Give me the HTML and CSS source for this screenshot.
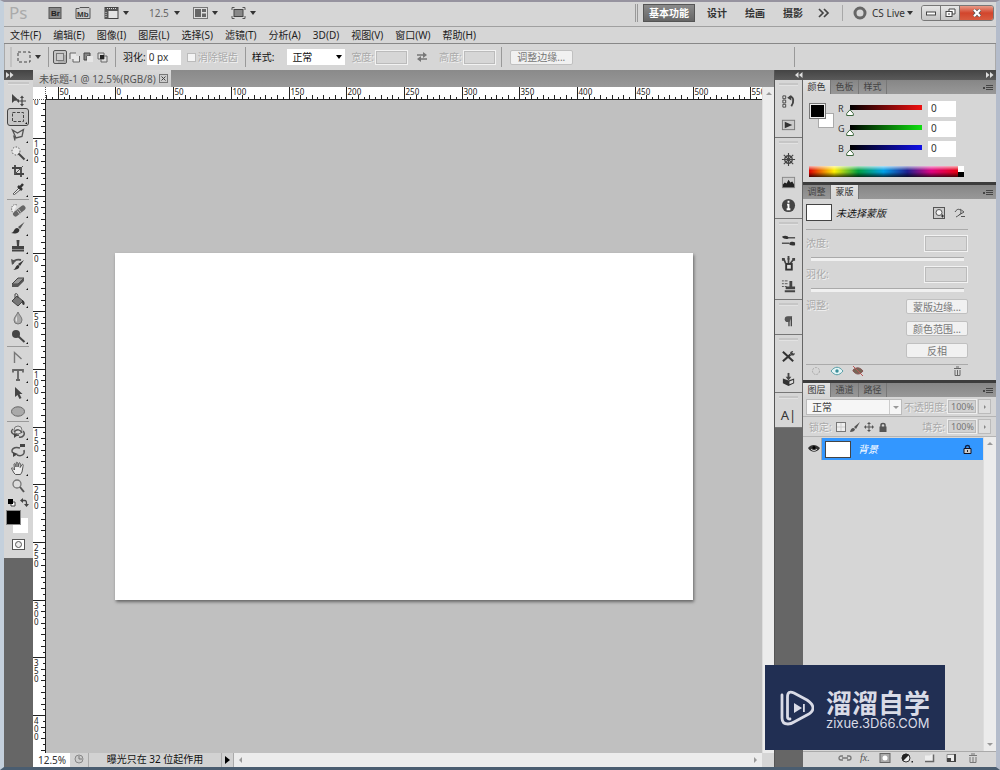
FILE: index.html
```html
<!DOCTYPE html>
<html lang="zh-CN">
<head>
<meta charset="utf-8">
<title>未标题-1</title>
<link rel="stylesheet" href="styles.css">
</head>
<body>
<div class="window">
  <header class="titlebar">
    <span class="ps">Ps</span>
    <button class="icon-btn" aria-label="Bridge"><svg width="14" height="14" viewBox="0 0 14 14"><rect x="1" y="1.500" width="12" height="11" fill="#888" stroke="#555"/><text x="3" y="10" class="badge-text">Br</text></svg></button>
    <button class="icon-btn mb" aria-label="Mini Bridge"><svg width="16" height="14" viewBox="0 0 16 14"><path d="M1 12.500V2.500h3l1-1h9l1 1v10z" fill="#ccc" stroke="#555"/><text x="2" y="10.500" class="badge-text dark">Mb</text></svg></button>
    <button class="icon-btn layout" aria-label="查看额外内容"><svg width="15" height="14" viewBox="0 0 15 14"><rect x="1" y="1.500" width="13" height="11" fill="#e4e4e4" stroke="#444"/><path d="M1 2h13v3H4.500v8H1z" fill="#555"/><path d="M3 2.500h10M2 6v6" stroke="#ddd" stroke-dasharray="1 1"/></svg><i class="caret"></i></button>
    <button class="icon-btn zoom-level">12.5<i class="caret"></i></button>
    <button class="icon-btn arrange" aria-label="排列文档"><svg width="15" height="14" viewBox="0 0 15 14"><rect x=".5" y="1.500" width="14" height="11" fill="#ddd" stroke="#777"/><path d="M2 3h6v8H2zM9 3h4v3H9zM9 7.500h4V11H9z" fill="#666"/></svg><i class="caret"></i></button>
    <button class="icon-btn screen" aria-label="屏幕模式"><svg width="15" height="14" viewBox="0 0 15 14"><rect x="3" y="3.500" width="9" height="7" fill="#888" stroke="#444"/><path d="M1 4V1.500h2.500M11.500 1.500H14V4M14 10v2.500h-2.500M3.500 12.500H1V10" fill="none" stroke="#555"/></svg><i class="caret"></i></button>
    <nav class="workspaces">
      <button class="space active">基本功能</button>
      <button class="space">设计</button>
      <button class="space">绘画</button>
      <button class="space">摄影</button>
      <button class="more" aria-label="更多"><svg width="12" height="10" viewBox="0 0 12 10"><path d="M1 1l4 4-4 4M6 1l4 4-4 4" fill="none" stroke="#444" stroke-width="1.700"/></svg></button>
    </nav>
    <button class="cslive"><svg width="14" height="14" viewBox="0 0 14 14"><circle cx="7" cy="7" r="5" fill="none" stroke="#666" stroke-width="3"/></svg>CS Live<i class="caret"></i></button>
    <div class="winbtns">
      <button aria-label="最小化"><svg width="10" height="8" viewBox="0 0 10 8"><rect x=".5" y="3" width="9" height="3" fill="#fff" stroke="#444"/></svg></button>
      <button aria-label="还原"><svg width="11" height="10" viewBox="0 0 11 10"><path d="M4 1h6v5H7V3.500H4z" fill="#fff" stroke="#444"/><rect x="1" y="3.500" width="6" height="5" fill="#fff" stroke="#444"/><path d="M3 6h2" stroke="#444"/></svg></button>
      <button class="close" aria-label="关闭"><svg width="10" height="8" viewBox="0 0 10 8"><path d="M2 .8l6 6.400M8 .8L2 7.200" stroke="#555" stroke-width="3.600"/><path d="M2 .8l6 6.400M8 .8L2 7.200" stroke="#fff" stroke-width="2.200"/></svg></button>
    </div>
  </header>

  <nav class="menubar">
    <button>文件(F)</button><button>编辑(E)</button><button>图像(I)</button><button>图层(L)</button><button>选择(S)</button><button>滤镜(T)</button><button>分析(A)</button><button>3D(D)</button><button>视图(V)</button><button>窗口(W)</button><button>帮助(H)</button>
  </nav>

  <section class="options">
    <div class="opt current">
      <svg width="14" height="12" viewBox="0 0 14 12"><rect x="1" y="1" width="12" height="10" fill="none" stroke="#444" stroke-dasharray="3 2"/></svg><i class="caret"></i>
    </div>
    <div class="opt modes">
      <button class="on" aria-label="新选区"><svg width="11" height="11" viewBox="0 0 11 11"><rect x="1.500" y="1.500" width="7" height="7" fill="#ccc" stroke="#777"/><path d="M3 10h7V3" fill="none" stroke="#999"/></svg></button>
      <button aria-label="添加到选区"><svg width="11" height="11" viewBox="0 0 11 11"><path d="M1 1h6v3h3.500v6H4V7H1z" fill="#e8e8e8"/><path d="M4 7v3h6.500V4M1 7V1h6" fill="none" stroke="#666"/></svg></button>
      <button aria-label="从选区减去"><svg width="11" height="11" viewBox="0 0 11 11"><path d="M1 1h6v3H4v4H1z" fill="#888" stroke="#444"/><path d="M4 4h6v6H4z" fill="#e6e6e6"/></svg></button>
      <button aria-label="与选区交叉"><svg width="11" height="11" viewBox="0 0 11 11"><path d="M1 1h6v6H1zM4 4h6v6H4z" fill="#ddd" stroke="#666"/><path d="M3 3h4v4H3z" fill="#222"/></svg></button>
    </div>
    <div class="opt feather">
      <label class="strong" for="feather">羽化:</label><input id="feather" class="field" type="text" value="0 px">
      <label class="check off"><input type="checkbox" disabled>消除锯齿</label>
    </div>
    <div class="opt style">
      <label class="strong" for="style">样式:</label>
      <select id="style"><option>正常</option></select>
      <label class="off" for="w">宽度:</label><input id="w" class="field disabled" type="text" disabled>
      <svg class="swap" width="10" height="10" viewBox="0 0 10 10"><path d="M0 3h6M10 7H4" stroke="#777" stroke-width="1.500"/><path d="M6 0l4 3-4 3zM4 4L0 7l4 3z" fill="#777"/></svg>
      <label class="off" for="h">高度:</label><input id="h" class="field disabled" type="text" disabled>
    </div>
    <div class="opt refine-box"><button class="btn refine">调整边缘...</button></div>
  </section>

  <main class="work">
    <aside class="tools">
      <div class="darkbar"><svg width="8" height="6" viewBox="0 0 8 6"><path d="M0 0l3.500 3L0 6zM4 0l3.500 3L4 6z" fill="#ddd"/></svg></div>
      <div class="toolbox">
        <i class="grip"></i>
        <div class="toolset">
          <button aria-label="移动"><svg viewBox="0 0 16 16"><path d="M2 3v9l2.500-2.300L9 9.500z" fill="#444"/><path d="M12 6v8M8 10h8" stroke="#444" stroke-width="1.200"/><path d="M12 4.500l2 2.500h-4zM12 15.500l2-2.500h-4zM6.800 10l2.200-2v4z" fill="#444"/></svg></button>
          <button class="more-tools on" aria-label="矩形选框"><svg viewBox="0 0 16 16"><rect x="2.500" y="3.500" width="11" height="9" fill="none" stroke="#444" stroke-dasharray="3 1.500"/></svg></button>
          <button class="more-tools" aria-label="套索"><svg viewBox="0 0 16 16"><path d="M2.500 3l5 3 6-3.500-1.500 7-6 1.500zM6 11l-2-1.500 1 4" fill="none" stroke="#555" stroke-width="1.300"/></svg></button>
          <button class="more-tools" aria-label="魔棒"><svg viewBox="0 0 16 16"><circle cx="6" cy="6" r="4" fill="#e8e8e8" stroke="#555" stroke-dasharray="1.500 1.500"/><path d="M8.500 8.500l6 6" stroke="#444" stroke-width="2"/></svg></button>
          <button class="more-tools" aria-label="裁剪"><svg viewBox="0 0 16 16"><path d="M5 2v9h9M2 5h9v9" fill="none" stroke="#444" stroke-width="1.800"/><path d="M5 11l8-8" stroke="#555"/></svg></button>
          <button class="more-tools" aria-label="吸管"><svg viewBox="0 0 16 16"><path d="M3 13l6-6 1.500 1.500-6 5z" fill="#eee" stroke="#555"/><path d="M8 5l4 4M10 6.500L13 3" stroke="#333" stroke-width="2.500"/></svg></button>
        </div>
        <div class="toolset">
          <button class="more-tools" aria-label="修复画笔"><svg viewBox="0 0 16 16"><path d="M5.500 12L13 6" stroke="#666" stroke-width="5" stroke-linecap="round"/><path d="M8.500 7l3 4M7 8.500l3 4" stroke="#bbb"/><path d="M7 3C2 1 0 7 3 11" fill="#eee" stroke="#777" stroke-dasharray="1.500 1"/></svg></button>
          <button class="more-tools" aria-label="画笔"><svg viewBox="0 0 16 16"><path d="M14.500 2L8 7l2 2z" fill="#555"/><path d="M1 13c3 0 3-5 6-5 3 .5 3 3 1 4.500-2 1.500-5 1-7 .5z" fill="#333"/></svg></button>
          <button class="more-tools" aria-label="仿制图章"><svg viewBox="0 0 16 16"><path d="M6.500 2h3l-.5 6h5v3H2V8h5z" fill="#444"/><path d="M2 12.500h12" stroke="#444" stroke-width="2"/></svg></button>
          <button class="more-tools" aria-label="历史记录画笔"><svg viewBox="0 0 16 16"><path d="M14 4L8 8l2 2zM3 14c2 0 3-5 5-5 3 1 1 5-5 5z" fill="#333"/><path d="M3 8c-1-3 3-5 8-4" fill="none" stroke="#555" stroke-width="1.800"/><path d="M1 3l5 2-4 4z" fill="#555"/></svg></button>
          <button class="more-tools" aria-label="橡皮擦"><svg viewBox="0 0 16 16"><path d="M2 10l6-6h6l-6 6z" fill="#999" stroke="#444"/><path d="M2 10h6v3H2zM8 10l6-6v3l-6 6z" fill="#555"/></svg></button>
          <button class="more-tools" aria-label="油漆桶"><svg viewBox="0 0 16 16"><path d="M2 9l5-5 6 5-5 5z" fill="#777" stroke="#444"/><path d="M5 6V2c2-1 3 0 3 4" fill="none" stroke="#444"/><path d="M12 8c3 1 3 4 2 5-2 0-2-2-2-5z" fill="#333"/></svg></button>
          <button class="more-tools" aria-label="模糊"><svg viewBox="0 0 16 16"><path d="M8 2c1 3 4 5 4 8a4 4 0 0 1-8 0c0-3 3-5 4-8z" fill="#aaa" stroke="#777"/><path d="M7 6c-2 3-2 5 0 6z" fill="#e4e4e4"/></svg></button>
          <button class="more-tools" aria-label="加深"><svg viewBox="0 0 16 16"><circle cx="6" cy="6" r="4" fill="#444"/><path d="M8.500 8.500l6 5.500" stroke="#444" stroke-width="2"/></svg></button>
        </div>
        <div class="toolset">
          <button class="more-tools" aria-label="路径"><svg viewBox="0 0 16 16"><path d="M4.500 14V3.500l7 6.500" fill="none" stroke="#777" stroke-width="1.400"/></svg></button>
          <button class="more-tools" aria-label="文字"><svg viewBox="0 0 16 16"><path d="M3 5.500V3h10v2.500M8 3v10M6 13h4" fill="none" stroke="#666" stroke-width="1.800"/></svg></button>
          <button class="more-tools" aria-label="路径选择"><svg viewBox="0 0 16 16"><path d="M5 2v10l2.500-2 2 4 2-1-2-4h3z" fill="#444"/></svg></button>
          <button class="more-tools" aria-label="椭圆"><svg viewBox="0 0 16 16"><ellipse cx="8" cy="8.500" rx="6.500" ry="4.700" fill="#aaa" stroke="#666"/></svg></button>
        </div>
        <div class="toolset">
          <button class="more-tools" aria-label="3D 旋转"><svg viewBox="0 0 16 16"><circle cx="8" cy="6" r="4" fill="#ddd" stroke="#777"/><path d="M3 5c-4 3 1 7 6 6M13 7c3 3 0 7-4 6M4 8c3-3 6-3 8 1" fill="none" stroke="#555" stroke-width="1.500"/><path d="M4 9l4 2-4 3z" fill="#444"/></svg></button>
          <button class="more-tools" aria-label="3D 相机"><svg viewBox="0 0 16 16"><path d="M10 6C4 4 0 8 3 11M7 13c5 2 8-1 7-5" fill="none" stroke="#555" stroke-width="1.500"/><path d="M10 2h5v3h-5zM3 10l5 2-5 3z" fill="#444"/></svg></button>
          <button class="more-tools" aria-label="抓手"><svg viewBox="0 0 16 16"><path d="M4 13L1.500 8.500c0-1 1-1 2 .5L4.500 10 4 4c1-1 1.500 0 2 3l.3-4.500c1-1 1.700 0 1.700 4.500l1-4c1-.8 1.500 0 1.200 4.500L12 4.500c1-.5 1.500 0 1 2L12 12l-1.500 2.500h-5z" fill="#eee" stroke="#555"/></svg></button>
          <button aria-label="缩放"><svg viewBox="0 0 16 16"><circle cx="7" cy="6" r="4" fill="#ddd" stroke="#777" stroke-width="1.300"/><path d="M10 9l4 5" stroke="#555" stroke-width="2"/></svg></button>
        </div>
        <div class="mini">
          <svg width="9" height="9" viewBox="0 0 9 9"><path d="M4 4h4v4H4z" fill="#fff" stroke="#444"/><path d="M1 1h5v5H1z" fill="#000"/></svg>
          <svg width="9" height="9" viewBox="0 0 9 9"><path d="M2 2.500h2.500c2 0 2 1 2 4" fill="none" stroke="#444" stroke-width="1.300"/><path d="M0 2.500L3 0v5zM4 6h5L6.500 9z" fill="#444"/></svg>
        </div>
        <div class="swatches"><i class="fg"></i><i class="bg"></i></div>
        <button class="quick" aria-label="快速蒙版"><svg width="13" height="11" viewBox="0 0 13 11"><rect x=".5" y=".5" width="12" height="10" fill="#fff" stroke="#555"/><circle cx="6.500" cy="5.500" r="3" fill="#eee" stroke="#555"/></svg></button>
      </div>
    </aside>

    <section class="doc">
      <div class="doctabs"><div class="doctab"><span>未标题-1 @ 12.5%(RGB/8)</span><button aria-label="关闭文档"><svg width="9" height="9" viewBox="0 0 9 9"><rect x=".5" y=".5" width="8" height="8" fill="#ccc" stroke="#777"/><path d="M2.500 2.500l4 4M6.500 2.500l-4 4" stroke="#444"/></svg></button></div></div>
      <div class="stage">
        <div class="corner"></div>
        <svg class="ruler-x" id="ruler-x"></svg>
        <div class="vscroll"><i class="tri up"></i></div>
        <svg class="ruler-y" id="ruler-y"></svg>
        <div class="canvas" id="canvas"><div class="paper" id="paper"></div></div>
        <div class="vscroll"></div>
      </div>
      <footer class="status">
        <input class="zoom" type="text" value="12.5%" aria-label="缩放比例">
        <span class="clock"><svg width="10" height="10" viewBox="0 0 10 10"><circle cx="5" cy="5" r="4" fill="#ccc" stroke="#888"/><path d="M5 2v3h3" fill="none" stroke="#777"/></svg></span>
        <span class="message">曝光只在 32 位起作用</span>
        <button class="menu-arrow" aria-label="状态菜单"><svg width="5" height="8" viewBox="0 0 5 8"><path d="M0 0l5 4-5 4z" fill="#000"/></svg></button>
        <div class="hscroll"><i class="tri left"></i><i class="tri right"></i></div>
        <i class="size-corner"></i>
      </footer>
    </section>

    <aside class="side">
      <div class="darkbar split"><svg width="8" height="6" viewBox="0 0 8 6"><path d="M3.500 0L0 3l3.500 3zM7.500 0L4 3l3.500 3z" fill="#ddd"/></svg><svg width="8" height="6" viewBox="0 0 8 6"><path d="M0 0l3.500 3L0 6zM4 0l3.500 3L4 6z" fill="#ddd"/></svg></div>
      <div class="sidebody">
        <div class="dock">
          <div class="dockgroup"><i class="grip"></i>
            <button aria-label="历史记录"><svg viewBox="0 0 16 16"><path d="M2 2h3v3H2zM2 6.500h3v3H2zM2 11h3v3H2z" fill="#ddd" stroke="#444"/><path d="M9 3c5-1 5 6 2 10" fill="none" stroke="#444" stroke-width="2"/><path d="M6.500 4L11 1v6z" fill="#444"/></svg></button>
            <button aria-label="动作"><svg viewBox="0 0 16 16"><rect x="1.500" y="3.500" width="13" height="10" fill="#ccc" stroke="#777"/><path d="M4 5l8 3.500L4 12z" fill="#333"/></svg></button>
          </div>
          <div class="dockgroup"><i class="grip"></i>
            <button aria-label="调整"><svg viewBox="0 0 16 16"><circle cx="8" cy="8" r="4" fill="none" stroke="#444" stroke-width="1.500"/><path d="M8 1v14M1 8h14M3 3l10 10M13 3L3 13" stroke="#444" stroke-width="1.200"/></svg></button>
            <button aria-label="直方图"><svg viewBox="0 0 16 16"><rect x="1.500" y="2.500" width="13" height="11" fill="#ccc" stroke="#888"/><path d="M2 13v-3l2-2 2 1 2-4 2 3 2-1 2 3v3z" fill="#222"/></svg></button>
            <button aria-label="信息"><svg viewBox="0 0 16 16"><circle cx="8" cy="8" r="7" fill="#444"/><path d="M8 3v2M6.500 7H8v5M6 12h4" fill="none" stroke="#fff" stroke-width="2"/></svg></button>
          </div>
          <div class="dockgroup"><i class="grip"></i>
            <button aria-label="画笔预设"><svg viewBox="0 0 16 16"><path d="M6 5h9M1 11h8" stroke="#555" stroke-width="1.600"/><path d="M1 4c3-2 7-1 7 1s-5 2-7-1zM15 13c-3 1-7 0-6-2s4-2 6-1z" fill="#333"/></svg></button>
            <button aria-label="画笔"><svg viewBox="0 0 16 16"><path d="M5 8L3 3M8 8V2M10 8l3-4" stroke="#444" stroke-width="1.800"/><path d="M1 2h3v3H1zM12 2h3v3h-3zM7 0h2v4H7z" fill="#444"/><rect x="5.500" y="8.500" width="6" height="6" fill="#ddd" stroke="#333" stroke-width="2"/></svg></button>
            <button aria-label="仿制源"><svg viewBox="0 0 16 16"><path d="M1 2h2M4 2h3M1 5h2M4 5h3M1 8h2M4 8h2" stroke="#555"/><path d="M9 2h3v6h3v3H5V8h4zM4 12h11v2H4z" fill="#444"/></svg></button>
          </div>
          <div class="dockgroup"><i class="grip"></i>
            <button aria-label="段落"><svg viewBox="0 0 16 16"><path d="M8.500 3v10M11 3v10" stroke="#444" stroke-width="1.400"/><path d="M12 2.500H7a3 3 0 0 0 0 6h2z" fill="#555"/></svg></button>
          </div>
          <div class="dockgroup"><i class="grip"></i>
            <button aria-label="工具预设"><svg viewBox="0 0 16 16"><path d="M2 3l11 10M2 13l8-7" stroke="#333" stroke-width="2.200"/><path d="M10 6c-1-3 1-4 3-4l-1 2 2 1 1-1c0 3-3 4-5 2z" fill="#444"/></svg></button>
            <button aria-label="3D"><svg viewBox="0 0 16 16"><path d="M2 7l6 2 6-2v5l-6 3-6-3z" fill="#333"/><path d="M8 1v6" stroke="#444" stroke-width="2"/><path d="M5 5h6L8 9z" fill="#444"/><path d="M9 10l4-1.500v3L9 13z" fill="#ddd"/></svg></button>
          </div>
          <div class="dockgroup"><i class="grip"></i>
            <button class="char" aria-label="字符">A|</button>
          </div>
        </div>

        <div class="panels">
          <section class="panel">
            <div class="tabs"><button class="tab active">颜色</button><button class="tab">色板</button><button class="tab">样式</button><i class="flyout"></i></div>
            <div class="color-body">
              <div class="color-main">
                <div class="pair"><i class="pf"></i><i class="pb"></i></div>
                <div class="channels">
                  <label for="r">R</label><input class="range red" id="r" type="range" min="0" max="255" value="0"><input class="num" type="text" value="0" aria-label="R 值">
                  <label for="g">G</label><input class="range green" id="g" type="range" min="0" max="255" value="0"><input class="num" type="text" value="0" aria-label="G 值">
                  <label for="b">B</label><input class="range blue" id="b" type="range" min="0" max="255" value="0"><input class="num" type="text" value="0" aria-label="B 值">
                </div>
              </div>
              <div class="spectrum"><i class="ramp"></i><i class="bw"></i></div>
            </div>
          </section>

          <section class="panel">
            <div class="tabs"><button class="tab">调整</button><button class="tab active">蒙版</button><i class="flyout"></i></div>
            <div class="mask-body">
              <div class="mask-head"><i class="thumb"></i><em>未选择蒙版</em>
                <svg width="12" height="12" viewBox="0 0 12 12"><rect x=".5" y=".5" width="11" height="11" fill="#ccc" stroke="#555"/><circle cx="6" cy="5.500" r="3" fill="#f4f4f4" stroke="#555"/><path d="M8 9h3M9.500 7.500v3" stroke="#333"/></svg>
                <svg class="vector" width="12" height="12" viewBox="0 0 12 12"><path d="M1 5c3-5 6-2 6 0s-3 4-5 5M6 2l4 3M5 8l5-3M7 9.500h4" fill="none" stroke="#555"/></svg>
              </div>
              <div class="mask-row"><label class="off" for="density">浓度:</label><input class="field disabled" id="density" type="text" disabled></div>
              <input class="flat" type="range" disabled aria-label="浓度滑块">
              <div class="mask-row"><label class="off" for="mf">羽化:</label><input class="field disabled" id="mf" type="text" disabled></div>
              <input class="flat" type="range" disabled aria-label="羽化滑块">
              <div class="mask-actions"><span class="off">调整:</span><div class="stack"><button class="btn">蒙版边缘...</button><button class="btn">颜色范围...</button><button class="btn">反相</button></div></div>
              <div class="mask-foot">
                <svg width="12" height="10" viewBox="0 0 12 10"><circle cx="6" cy="5" r="3.500" fill="none" stroke="#aaa" stroke-dasharray="2 1"/></svg>
                <svg width="14" height="10" viewBox="0 0 14 10"><path d="M1 5c4-5 8-5 12 0-4 5-8 5-12 0z" fill="#e4f4f5" stroke="#5aa0a8"/><circle cx="7" cy="5" r="1.700" fill="#3c8f9a"/></svg>
                <svg width="12" height="10" viewBox="0 0 12 10"><path d="M1 4c3-3 7-3 10 1-3 4-7 4-10 0z" fill="#765" stroke="#855"/><path d="M1 0l10 10" stroke="#b55"/></svg>
                <svg class="trash" width="9" height="10" viewBox="0 0 9 10"><path d="M1 2.500h7M3 1h3M2 4v5.500h5V4M4.500 4v5" fill="none" stroke="#666"/></svg>
              </div>
            </div>
          </section>

          <section class="panel layers">
            <div class="tabs"><button class="tab active">图层</button><button class="tab">通道</button><button class="tab">路径</button><i class="flyout"></i></div>
            <div class="layer-row">
              <select class="blend" aria-label="混合模式"><option>正常</option></select>
              <label class="off" for="op">不透明度:</label><input id="op" class="pct" type="text" value="100%" disabled><button class="step" aria-label="不透明度滑块"></button>
            </div>
            <div class="layer-row">
              <span class="off lock">锁定:</span>
              <svg width="10" height="10" viewBox="0 0 10 10"><rect x=".5" y=".5" width="9" height="9" fill="#eee" stroke="#777"/><path d="M5 1v4H1M5 9V5h4" fill="none" stroke="#ccc"/></svg>
              <svg width="10" height="10" viewBox="0 0 10 10"><path d="M10 0L4 5l2 2zM0 10c1-4 3-5 5-3 0 2-2 3-5 3z" fill="#555"/></svg>
              <svg width="10" height="10" viewBox="0 0 10 10"><path d="M5 1v8M1 5h8" stroke="#555"/><path d="M5 0l2 2H3zM5 10l2-2H3zM0 5l2-2v4zM10 5L8 3v4z" fill="#555"/></svg>
              <svg width="10" height="10" viewBox="0 0 10 10"><path d="M3 5V3c0-2 4-2 4 0v2" fill="none" stroke="#555" stroke-width="1.500"/><path d="M1.500 4.500h7V10h-7z" fill="#555"/></svg>
              <label class="off fill" for="fl">填充:</label><input id="fl" class="pct" type="text" value="100%" disabled><button class="step" aria-label="填充滑块"></button>
            </div>
            <div class="list">
              <div class="rows">
                <div class="layer">
                  <span class="eye"><svg width="12" height="10" viewBox="0 0 12 10"><path d="M0 4c3-4 8-4 12 0-3 5-9 5-12 0z" fill="#333"/><path d="M3 5c2 2 4 2 6 0" fill="none" stroke="#eee"/><circle cx="6" cy="3.500" r="1.500" fill="#000"/></svg></span>
                  <div class="selected"><i class="thumb"></i><em>背景</em><svg width="9" height="10" viewBox="0 0 9 10"><path d="M2.500 5V3c0-2 4-2 4 0v2" fill="none" stroke="#124" stroke-width="1.300"/><path d="M1 4.500h7v5H1z" fill="#ccc" stroke="#112"/><path d="M4.500 6v2" stroke="#222"/></svg></div>
                </div>
              </div>
              <div class="vscroll ends"><i class="tri up"></i><i class="tri down"></i></div>
            </div>
            <div class="layer-foot">
              <svg viewBox="0 0 14 10"><path d="M5 3H3a2 2 0 0 0 0 4h2M9 3h2a2 2 0 0 1 0 4H9M4 5h6" fill="none" stroke="#777" stroke-width="1.300"/></svg>
              <span class="fx">fx.</span>
              <svg viewBox="0 0 14 10"><rect x="2" y=".5" width="10" height="9" fill="#aaa" stroke="#666"/><circle cx="7" cy="5" r="2.500" fill="#fff"/></svg>
              <svg viewBox="0 0 14 10"><circle cx="6" cy="5" r="4" fill="#eee" stroke="#333"/><path d="M3 8A4 4 0 0 1 9 2z" fill="#222"/><path d="M11.500 8h1.500v1.500h-1.500z" fill="#222"/></svg>
              <svg viewBox="0 0 14 10"><path d="M3 8.500V2.500h5l1-1h2v7z" fill="#eee"/><path d="M3 8.500h8.500v-7" fill="none" stroke="#666" stroke-width="1.500"/></svg>
              <svg viewBox="0 0 14 10"><path d="M3 1.500h8v7H3z" fill="#eee" stroke="#888"/><path d="M3 5h4v4H3zM10 1h2v8h-2zM3 8h9v1H3z" fill="#444"/></svg>
              <svg viewBox="0 0 14 10"><path d="M3 2.500h8M5 1h4M4 4v5.500h6V4M7 4v5" fill="none" stroke="#777"/></svg>
            </div>
          </section>
        </div>
      </div>
    </aside>
  </main>
</div>

<div class="watermark">
  <svg width="34" height="36" viewBox="0 0 34 36"><g fill="none" stroke="#d9dbe6" stroke-width="2.800" stroke-linecap="round" stroke-linejoin="round"><path d="M2 5v23q0 6 6 6 3 0 6-2l13-7q6-3 6-7t-6-8L14 3Q7.500 0 7.500 7v20q0 2 2.500 2"/></g><path d="M14 13l8 5-8 5zM23 14h1.800v8H23z" fill="#d9dbe6"/></svg>
  <div class="wm-text"><span class="wm-name">溜溜自学</span><span class="wm-url">zixue.3D66.COM</span></div>
</div>
<script src="rulers.js"></script>
</body>
</html>
```
FILE: styles.css
```css
* { box-sizing: border-box; }
html, body { height: 100%; margin: 0; }
body {
  font-family: "Noto Sans", "Noto Sans CJK SC", sans-serif;
  font-size: 10px;
  line-height: 12px;
  color: #333;
  background: #d6d6d6;
  overflow: hidden;
  position: relative;
}
button, input, select { font: inherit; color: inherit; margin: 0; padding: 0; border: 0; border-radius: 0; background: none; }
input, select { outline: 0; min-width: 0; }
button { display: flex; align-items: center; justify-content: center; white-space: nowrap; flex: none; }
svg { display: block; flex: none; }
i { display: block; flex: none; }

.window {
  height: 100%;
  display: flex;
  flex-direction: column;
  border: 4px solid #c4d0dc;
  border-top: 2px solid #96939f;
  border-right-color: #b4bccb;
  border-bottom: 3px solid #4a5d70;
}
.caret { border: 3px solid transparent; border-top: 4px solid #333; border-bottom: 0; margin-left: 4px; }

.titlebar { display: flex; align-items: center; height: 25px; flex: none; border-bottom: 1px solid #a0a0a0; padding: 0 0 2px 5px; }
.ps { font-size: 17px; line-height: 22px; color: #aaa; width: 39px; }
.icon-btn { height: 20px; }
.icon-btn.mb, .icon-btn.layout { margin-left: 13px; }
.zoom-level { margin-left: 20px; color: #666; }
.zoom-level .caret { margin-left: 5px; }
.arrange, .screen { margin-left: 13px; }
.badge-text { font: bold 8px "Liberation Sans", sans-serif; fill: #222; }
.badge-text.dark { fill: #333; }
.workspaces { display: flex; align-items: center; margin-left: auto; padding-left: 5px; border-left: 3px double #999; height: 18px; }
.space { font-weight: bold; padding: 0 9px; height: 18px; color: #333; }
.space.active { background: linear-gradient(#8a8a8a, #666); color: #fff; border: 1px solid #555; padding: 0 5px; margin-right: 3px; }
.more { padding: 0 12px 0 6px; height: 16px; border-right: 1px solid #a8a8a8; }
.cslive { margin: 0 10px; gap: 5px; height: 18px; }
.cslive .caret { margin-left: -3px; }
.winbtns { display: flex; height: 16px; margin-right: 2px; border: 1px solid #777; border-radius: 3px; overflow: hidden; }
.winbtns button { width: 19px; background: linear-gradient(#e6e6e6, #c6c6c6); border-right: 1px solid #777; }
.winbtns .close { width: 33px; border: 0; background: linear-gradient(#e89a88, #d2452c 50%, #d85c40); }
.cslive { margin-right: 8px; }

.menubar { display: flex; gap: 12px; height: 17px; flex: none; padding: 0 6px; border-bottom: 1px solid #888; }
.menubar button { color: #222; }

.options { display: flex; align-items: center; height: 26px; flex: none; padding-left: 5px; border: 1px solid #aaa; border-width: 0 1px; }
.opt { display: flex; align-items: center; height: 20px; border-right: 1px solid #999; flex: none; }
.current { border-left: 2px solid #c2c2c2; padding: 0 7px 0 5px; }
.modes { padding: 0 6px 0 4px; }
.modes button { width: 14px; height: 14px; }
.modes .on { border: 1px solid #555; background: #c4c4c4; border-radius: 2px; }
.feather { padding: 0 7px; }
.style { padding: 0 5px 0 6px; }
.refine-box { flex: 1; max-width: 293px; padding-left: 8px; }
.strong { color: #111; }
.off { color: #aaa; text-shadow: 1px 1px 0 #f2f2f2; }
.field { height: 15px; width: 34px; padding: 0 2px; background: #fff; }
.feather .field { margin: 0 6px 0 1px; }
.check { display: flex; align-items: center; gap: 2px; }
.check input { appearance: none; width: 9px; height: 9px; background: #f4f4f4; border: 1px solid #bbb; }
.field.disabled { background: #d6d6d6; border: 1px solid #f2f2f2; outline: 1px solid #bbb; outline-offset: -2px; margin-left: 1px; }
.style .field { width: 33px; }
.style select { margin: 0 6px 0 13px; }
select { appearance: none; width: 58px; height: 16px; padding: 0 5px; color: #111; background: #fff url("data:image/svg+xml,%3Csvg xmlns='http://www.w3.org/2000/svg' width='6' height='4'%3E%3Cpath d='M0 0h6L3 4z'/%3E%3C/svg%3E") no-repeat right 3px center; }
.swap { margin: 0 12px 0 9px; }
.btn { height: 15px; background: #f1f1f1; border: 1px solid #c0c0c0; border-radius: 2px; color: #777; }
.refine { width: 63px; }

.work { flex: 1; display: flex; min-height: 0; }
.darkbar { height: 10px; flex: none; display: flex; align-items: center; padding: 0 2px; background: linear-gradient(#444, #5a5a5a); }
.darkbar.split { justify-content: space-between; padding: 0 2px 0 20px; }
.grip { height: 3px; margin: 2px 4px 0; background: #c6c6c6; border-bottom: 1px solid #e2e2e2; }

.tools { width: 29px; flex: none; background: #666; }
.toolbox { background: #d6d6d6; padding-bottom: 7px; display: flex; flex-direction: column; }
.toolset { display: flex; flex-direction: column; padding: 0 4px 0 3px; }
.toolset:nth-of-type(1) { padding-top: 5px; }
.toolset + .toolset::before { content: ""; height: 1px; margin: 1px 0; background: #999; }
.toolset button { height: 18px; width: 22px; position: relative; }
.toolset svg { width: 16px; height: 16px; }
.toolset .on { border: 1px solid #444; border-radius: 3px; background: #c6c6c6; }
.more-tools::after { content: ""; position: absolute; right: 1px; bottom: 1px; border: 1px solid #111; border-left-color: transparent; border-top-color: transparent; }
.mini { display: flex; justify-content: space-between; padding: 3px 4px 3px 3px; }
.swatches { display: flex; padding-left: 2px; height: 25px; align-items: flex-start; }
.fg { width: 15px; height: 15px; background: #000; border: 1px solid #888; z-index: 1; }
.bg { width: 15px; height: 15px; background: #fff; margin: 8px 0 0 -8px; }
.quick { height: 13px; margin: 3px 0 0; }

.doc { flex: 1; min-width: 0; display: flex; flex-direction: column; }
.doctabs { height: 17px; flex: none; display: flex; background: linear-gradient(#8a8a8a, #989898); }
.doctab { display: flex; align-items: center; gap: 3px; padding: 0 3px 0 6px; background: linear-gradient(#dadada, #c8c8c8); color: #555; }
.stage { flex: 1; min-height: 0; display: grid; grid-template: 13px minmax(0, 1fr) / 13px minmax(0, 1fr) 12px; }
.corner { background: #fff; border-right: 1px dotted #555; border-bottom: 1px dotted #555; }
.ruler-x, .ruler-y { width: 100%; height: 100%; background: #fff; overflow: hidden; }
.tick { stroke: #222; shape-rendering: crispEdges; }
.tick-label { font: 8px "Noto Sans", sans-serif; fill: #222; }
.vscroll { background: #ececec; border-left: 1px solid #ddd; display: flex; flex-direction: column; align-items: center; padding: 5px 0; }
.vscroll.ends { justify-content: space-between; width: 13px; }
.tri { border: 3px solid transparent; }
.tri.up { border-top: 0; border-bottom-color: #999; }
.tri.down { border-bottom: 0; border-top-color: #999; }
.tri.left { border-left: 0; border-right-color: #999; }
.tri.right { border-right: 0; border-left-color: #999; }
.canvas { background: #c0c0c0; display: flex; align-items: center; justify-content: center; }
.paper { width: 80.6%; aspect-ratio: 5 / 3; background: #fff; box-shadow: 1px 2px 3px #666; }
.status { height: 14px; flex: none; display: flex; background: #d2d2d2; }
.zoom { width: 37px; padding-left: 5px; background: #fff; }
.clock { padding: 1px 4px; border-right: 1px solid #aaa; }
.message { width: 132px; text-align: center; color: #111; }
.menu-arrow { width: 13px; border: 1px solid #aaa; border-width: 0 1px; }
.hscroll { flex: 1; display: flex; align-items: center; justify-content: space-between; padding: 0 5px; background: #ececec; }
.size-corner { width: 12px; background: #d6d6d6; }

.side { width: 222px; flex: none; display: flex; flex-direction: column; background: #666; border-left: 1px solid #555; }
.sidebody { flex: 1; min-height: 0; display: flex; gap: 1px; }
.dock { width: 27px; flex: none; }
.dockgroup { background: #d6d6d6; border-bottom: 1px solid #777; padding: 1px 0; display: flex; flex-direction: column; }
.dockgroup .grip { margin-bottom: 4px; }
.dockgroup button { height: 23px; }
.dockgroup svg { width: 15px; height: 15px; }
.char { font-size: 13px; color: #333; }

.panels { flex: 1; min-width: 0; display: flex; flex-direction: column; gap: 3px; background: #3c3c3c; }
.panel { background: #d6d6d6; }
.tabs { display: flex; height: 14px; background: linear-gradient(#868686, #989898); }
.tab { width: 28px; border-right: 1px solid #777; color: #444; font-size: 9px; }
.tab.active { background: linear-gradient(#e2e2e2, #d6d6d6); color: #333; }
.flyout { width: 10px; height: 7px; margin: 4px 3px 0 auto; background: repeating-linear-gradient(#444 0 1px, transparent 1px 2px) right / 7px 6px no-repeat, linear-gradient(#444, #444) left center / 2px 2px no-repeat; }

.color-body { padding: 7px 32px 5px 6px; }
.color-main { display: flex; gap: 3px; padding-right: 8px; }
.pair { width: 26px; padding-top: 2px; }
.pf { width: 17px; height: 16px; background: #000; border: 1px solid #777; outline: 1px solid #eee; outline-offset: -2px; position: relative; z-index: 1; }
.pb { width: 16px; height: 15px; background: #fff; border: 1px solid #aaa; margin: -6px 0 0 9px; }
.channels { flex: 1; display: grid; grid-template-columns: 8px 1fr 28px; column-gap: 4px; row-gap: 4px; }
.channels label { line-height: 16px; font-size: 9px; }
.num { height: 16px; width: 28px; background: #fff; padding: 0 3px 2px; }
.range { appearance: none; width: calc(100% + 6px); height: 12px; margin: 4px 0 0 -4px; }
.range::-webkit-slider-runnable-track { height: 12px; background: linear-gradient(90deg, #000, var(--ink)) 4px 0 / calc(100% - 8px) 5px no-repeat; }
.range::-webkit-slider-thumb { appearance: none; width: 8px; height: 7px; margin-top: 4px; background: url("data:image/svg+xml,%3Csvg xmlns='http://www.w3.org/2000/svg' width='8' height='7'%3E%3Cpath d='M4 .8L7.300 4.500V6.500H.7V4.500z' fill='white' stroke='%23406a40'/%3E%3C/svg%3E"); }
.red { --ink: #f01010; }
.green { --ink: #10e010; }
.blue { --ink: #1010e8; }
.spectrum { display: flex; height: 11px; margin-top: 9px; }
.ramp { flex: 1; background: linear-gradient(rgba(255, 255, 255, .7), transparent 40%, transparent 55%, rgba(0, 0, 0, .7)), linear-gradient(90deg, #e00000, #fff000 17%, #00a040 33%, #00a0e8 50%, #202090 66%, #e00080 82%, #e80010); }
.bw { width: 6px; background: linear-gradient(#fff 50%, #000 50%); }

.mask-body { padding: 0 28px 0 3px; }
.mask-head { display: flex; align-items: center; height: 31px; border-bottom: 1px solid #aaa; padding: 0 2px 3px 0; }
.mask-head em { margin: 0 auto 0 4px; color: #111; }
.vector { margin: 0 0 0 9px; }
.thumb { width: 26px; height: 17px; background: #fff; border: 1px solid #444; }
.mask-row { display: flex; justify-content: space-between; align-items: center; height: 18px; margin-top: 4px; }
.mask-row .field { width: 44px; height: 17px; }
.flat { appearance: none; display: block; height: 4px; width: calc(100% - 9px); margin: 5px auto 0; background: #f0f0f0; border-top: 1px solid #aaa; }
.flat::-webkit-slider-thumb { appearance: none; width: 0; height: 0; }
.mask-actions { display: flex; justify-content: space-between; margin-top: 7px; }
.stack { width: 62px; display: flex; flex-direction: column; gap: 7px; }
.mask-foot { display: flex; align-items: center; gap: 8px; height: 16px; margin-top: 6px; padding: 0 6px 3px 4px; border-top: 1px solid #aaa; }
.trash { margin-left: auto; }

.layers { flex: 1; min-height: 0; display: flex; flex-direction: column; }
.layer-row { display: flex; align-items: center; height: 20px; flex: none; padding: 0 5px 0 3px; border-bottom: 1px solid #b4b4b4; }
.layer-row svg { margin-right: 4px; }
.blend { width: 96px; border: 1px solid #bbb; background-color: #f6f6f6; color: #444; margin-right: 2px; background-image: url("data:image/svg+xml,%3Csvg xmlns='http://www.w3.org/2000/svg' width='12' height='14'%3E%3Cpath d='M.5 0v14' stroke='%23ccc'/%3E%3Cpath d='M4 6h6L7 9z' fill='%23999'/%3E%3C/svg%3E"); background-position: right 0 center; }
.pct { width: 30px; height: 15px; border: 1px solid #eee; outline: 1px solid #bbb; outline-offset: -2px; background: #d2d2d2; padding-left: 3px; margin: 0 1px 0 auto; color: #777; font-size: 9px; }
.step { width: 13px; height: 15px; background: #dedede; border: 1px solid #bbb; }
.step::before { content: ""; border: 2px solid transparent; border-left-color: #888; border-right: 0; }
.lock { margin: 0 4px 0 3px; }
.fill { margin-left: auto; }
.fill + .pct { margin-left: 2px; }
.list { flex: 1; min-height: 0; display: flex; }
.rows { flex: 1; }
.layer { display: flex; height: 22px; padding-left: 3px; margin-top: 1px; }
.eye { width: 16px; display: flex; align-items: center; justify-content: center; border-right: 1px solid #aaa; }
.selected { flex: 1; display: flex; align-items: center; background: #3397ff; color: #fff; padding: 0 11px 0 3px; }
.selected em { margin: 0 auto 0 7px; }
.layer-foot { display: flex; align-items: center; justify-content: space-between; height: 16px; flex: none; border-top: 1px solid #aaa; padding: 0 16px 3px 35px; }
.layer-foot svg { width: 14px; height: 10px; }
.fx { font: italic 10px/12px "Liberation Serif", serif; color: #555; }

.watermark { position: absolute; right: 55px; bottom: 20px; width: 180px; height: 85px; z-index: 2; display: flex; align-items: center; gap: 12px; padding-left: 15px; background: #212f53; color: #d9dbe6; }
.wm-text { display: flex; flex-direction: column; }
.wm-name { font: bold 26px/30px "Noto Sans CJK SC", sans-serif; }
.wm-url { font: 13px/12px Inter, sans-serif; }
```
FILE: rulers.js
```js
const SVG = "http://www.w3.org/2000/svg";
const paper = document.getElementById("paper");

function add(parent, name, attrs, text) {
  const node = document.createElementNS(SVG, name);
  for (const key in attrs) node.setAttribute(key, attrs[key]);
  if (text !== undefined) node.textContent = text;
  parent.appendChild(node);
}

function drawRuler(id, horizontal) {
  const svg = document.getElementById(id);
  const box = svg.getBoundingClientRect();
  const page = paper.getBoundingClientRect();
  const unit = page.width / 500;
  const origin = horizontal ? page.left - box.left : page.top - box.top;
  const length = horizontal ? box.width : box.height;
  const depth = horizontal ? box.height : box.width;
  svg.replaceChildren();
  for (let value = -300; value <= 800; value += 5) {
    const at = Math.round(origin + value * unit) + 0.5;
    if (at < -30 || at > length) continue;
    const size = value % 50 === 0 ? depth : value % 10 === 0 ? 5 : 3;
    const line = horizontal
      ? { x1: at, x2: at, y1: depth - size, y2: depth }
      : { y1: at, y2: at, x1: depth - size, x2: depth };
    add(svg, "line", { ...line, class: "tick" });
    if (value % 50 !== 0) continue;
    const label = String(Math.abs(value));
    if (horizontal) {
      add(svg, "text", { x: at + 1, y: 8, class: "tick-label" }, label);
    } else {
      // One text per label, with its digits stacked down the ruler.
      const digits = [...label];
      add(svg, "text", {
        x: digits.map(() => 1).join(" "),
        y: digits.map((_, i) => at + 8 + i * 8).join(" "),
        class: "tick-label"
      }, label);
    }
  }
  const edge = depth - 0.5;
  add(svg, "line", horizontal
    ? { x1: 0, x2: length, y1: edge, y2: edge, class: "tick" }
    : { y1: 0, y2: length, x1: edge, x2: edge, class: "tick" });
}

function draw() {
  drawRuler("ruler-x", true);
  drawRuler("ruler-y", false);
}

draw();
window.addEventListener("resize", draw);
```
